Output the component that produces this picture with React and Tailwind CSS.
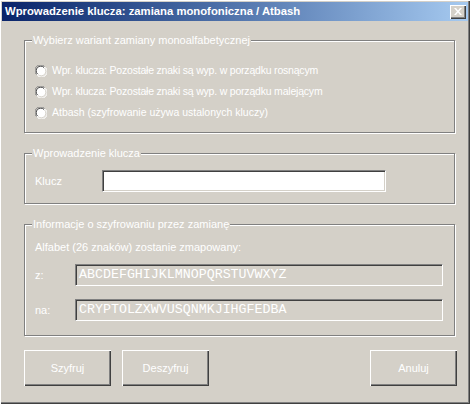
import React from 'react';

const font = { fontFamily: '"Liberation Sans", Arial, sans-serif' };

// pola w stylu klasycznego Windows
const sunken = 'border border-t-[#808080] border-l-[#808080] border-r-white border-b-white shadow-[inset_1px_1px_0_#404040,inset_-1px_-1px_0_#d4d0c8]';
const raised = 'shadow-[inset_1px_1px_0_#fff,inset_-1px_-1px_0_#404040,inset_-2px_-2px_0_#808080]';

const GroupBox = ({ title, className = '', children }) => (
    <div className={`relative border border-[#808080] shadow-[inset_1px_1px_0_#fff,1px_1px_0_#fff] ${className}`}>
        <span className="absolute left-[7px] top-[-7px] px-[1px] bg-[#d4d0c8] leading-[13px] text-[11px] text-white">
            {title}
        </span>
        {children}
    </div>
);

const Radio = ({ label, tight }) => (
    <div className="flex items-center h-[21px]">
        <svg width="12" height="12" viewBox="0 0 12 12" className="shrink-0">
            <circle cx="6" cy="6" r="5.5" fill="#fff" />
            <path d="M1.5 9.5 A5.5 5.5 0 0 1 9.5 1.5" stroke="#808080" strokeWidth="1" fill="none" />
            <path d="M2.5 9 A4.3 4.3 0 0 1 9 2.5" stroke="#404040" strokeWidth="1" fill="none" />
            <path d="M10.5 2.5 A5.5 5.5 0 0 1 2.5 10.5" stroke="#fff" strokeWidth="1" fill="none" />
            <path d="M9.5 3 A4.3 4.3 0 0 1 3 9.5" stroke="#d4d0c8" strokeWidth="1" fill="none" />
        </svg>
        <span className={`ml-[5px] text-[10.5px] text-white leading-[13px] ${tight ? 'tracking-[-0.2px]' : ''}`}>{label}</span>
    </div>
);

const Button = ({ children }) => (
    <button className={`w-[87px] h-[36px] bg-[#d4d0c8] text-[11px] text-white ${raised}`} style={font}>
        {children}
    </button>
);

const mono = { fontFamily: '"Liberation Mono", "Courier New", monospace' };

export default function App() {
    return (
        <div
            className="w-[470px] h-[404px] bg-[#d4d0c8] flex flex-col shadow-[inset_1px_1px_0_#fff,inset_-1px_-1px_0_#404040,inset_-2px_-2px_0_#808080] overflow-hidden"
            style={font}
        >
            {/* pasek tytułu */}
            <div className="mt-[2px] mx-[2px] h-[19px] flex items-center bg-gradient-to-r from-[#0a246a] to-[#a6caf0] pl-[3px] pr-[2px]">
                <span className="text-[11.3px] font-bold text-white leading-[13px]">
                    Wprowadzenie klucza: zamiana monofoniczna / Atbash
                </span>
                <button className={`ml-auto w-[16px] h-[14px] bg-[#d4d0c8] flex items-center justify-center ${raised}`}>
                    <svg width="8" height="7" viewBox="0 0 8 7">
                        <path d="M0 0h2l2 2.5L6 0h2L5 3.5 8 7H6L4 4.5 2 7H0l3-3.5z" fill="#fff" />
                    </svg>
                </button>
            </div>

            {/* zawartość okna */}
            <div className="pl-[24px] pr-[15px] flex flex-col">
                <GroupBox title="Wybierz wariant zamiany monoalfabetycznej" className="mt-[19px] h-[93px] pt-[19px] pl-[10px]">
                    <Radio tight label="Wpr. klucza: Pozostałe znaki są wyp. w porządku rosnącym" />
                    <Radio tight label="Wpr. klucza: Pozostałe znaki są wyp. w porządku malejącym" />
                    <Radio label="Atbash (szyfrowanie używa ustalonych kluczy)" />
                </GroupBox>

                <GroupBox title="Wprowadzenie klucza" className="mt-[20px] h-[51px] pt-[16px] pl-[10px]">
                    <div className="flex items-center">
                        <span className="w-[67px] text-[11px] text-white">Klucz</span>
                        <div className={`w-[284px] h-[22px] bg-white ${sunken}`}></div>
                    </div>
                </GroupBox>

                <GroupBox title="Informacje o szyfrowaniu przez zamianę" className="mt-[20px] h-[112px] pt-[16px] pl-[10px]">
                    <div className="text-[11px] text-white leading-[13px]">Alfabet (26 znaków) zostanie zmapowany:</div>
                    <div className="flex items-center mt-[10px]">
                        <span className="w-[40px] text-[11px] text-white">z:</span>
                        <div className={`w-[368px] h-[22px] flex items-center pl-[3px] ${sunken}`}>
                            <span className="text-[13.3px] text-white" style={mono}>
                                ABCDEFGHIJKLMNOPQRSTUVWXYZ
                            </span>
                        </div>
                    </div>
                    <div className="flex items-center mt-[13px]">
                        <span className="w-[40px] text-[11px] text-white">na:</span>
                        <div className={`w-[368px] h-[22px] flex items-center pl-[3px] ${sunken}`}>
                            <span className="text-[13.3px] text-white" style={mono}>
                                CRYPTOLZXWVUSQNMKJIHGFEDBA
                            </span>
                        </div>
                    </div>
                </GroupBox>

                <div className="flex mt-[14px] mr-[-2px]">
                    <Button>Szyfruj</Button>
                    <div className="ml-[11px]"><Button>Deszyfruj</Button></div>
                    <div className="ml-auto"><Button>Anuluj</Button></div>
                </div>
            </div>
        </div>
    );
}
